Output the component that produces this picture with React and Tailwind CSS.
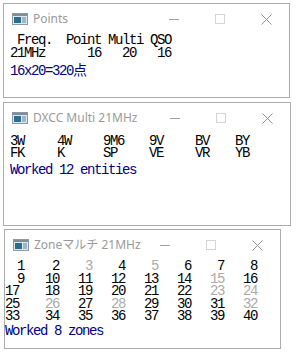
import React from "react";

const mono = "font-['Liberation_Mono','Noto_Sans_CJK_JP',monospace] text-[14px] tracking-[-1.4px]";

const WinIcon = () => (
  <svg width="16" height="12" viewBox="0 0 16 12">
    <rect x="0.5" y="0.5" width="15" height="11" fill="#dfe6ec" stroke="#8a98a6" />
    <rect x="1" y="1" width="14" height="2" fill="#7d8d9c" />
    <rect x="2" y="4" width="7" height="6" fill="#2b6e8c" />
    <rect x="10" y="4" width="4" height="6" fill="#9fb6c6" />
  </svg>
);

const Window = ({ title, className, children }) => (
  <div className={`flex flex-col border border-[#ababab] bg-white ${className}`}>
    <div className="flex h-[30px] shrink-0 items-center">
      <div className="ml-[8px] flex w-[16px] items-center">
        <WinIcon />
      </div>
      <div className="ml-[5px] flex-1 font-['Segoe_UI','Noto_Sans','Noto_Sans_CJK_JP',sans-serif] text-[12px] text-[#9a9a9a]">
        {title}
      </div>
      <div className="flex h-full w-[46px] items-center justify-center">
        <div className="h-px w-[10px] bg-[#a0a0a0]" />
      </div>
      <div className="flex h-full w-[46px] items-center justify-center">
        <div className="h-[10px] w-[10px] border border-[#d4d4d4]" />
      </div>
      <div className="flex h-full w-[46px] items-center justify-center">
        <svg width="11" height="11" viewBox="0 0 11 11">
          <path d="M0.5 0.5 L10.5 10.5 M10.5 0.5 L0.5 10.5" stroke="#8f8f8f" strokeWidth="1" />
        </svg>
      </div>
    </div>
    {children}
  </div>
);

const dxcc = [
  ["3W", "4W", "9M6", "9V", "BV", "BY"],
  ["FK", "K", "SP", "VE", "VR", "YB"],
];

const worked = [3, 5, 15, 23, 24, 26, 28, 32];

export default function App() {
  const zones = Array.from({ length: 40 }, (_, i) => i + 1);

  return (
    <div className="h-[352px] w-[297px] overflow-hidden bg-white pt-[3px]">
      <Window title="Points" className="ml-[3px] h-[95px] w-[287px]">
        <div className={`${mono} pl-[6px] leading-[13px] text-black`}>
          <div className="whitespace-pre"> Freq.  Point Multi QSO</div>
          <div className="whitespace-pre">21MHz      16   20   16</div>
          <div className="mt-[5px] whitespace-pre text-[#000080]">16x20=320点</div>
        </div>
      </Window>

      <Window title="DXCC Multi 21MHz" className="ml-[3px] mt-[4px] h-[124px] w-[288px]">
        <div className={`${mono} pl-[6px] pt-[2px] leading-[12px] text-black`}>
          {dxcc.map((row, r) => (
            <div key={r} className="grid grid-cols-[47px_46px_46px_46px_40px_auto]">
              {row.map((c) => (
                <div key={c}>{c}</div>
              ))}
            </div>
          ))}
          <div className="mt-[5px] text-[#000080]">Worked 12 entities</div>
        </div>
      </Window>

      <Window title="Zoneマルチ 21MHz" className="ml-[4px] mt-[3px] h-[120px] w-[277px]">
        <div className={`${mono} leading-[12.5px] text-black`}>
          <div className="grid grid-cols-[19px_35px_33px_33px_33px_33px_33px_33px]">
            {zones.map((z, i) => (
              <div
                key={z}
                className={`text-right ${worked.includes(z) ? "text-[#aaaaaa]" : ""} ${
                  i % 8 === 0 && z > 9 ? "pr-[6px]" : ""
                }`}
              >
                {z}
              </div>
            ))}
          </div>
          <div className="mt-[2px] text-[#000080]">Worked 8 zones</div>
        </div>
      </Window>
    </div>
  );
}
